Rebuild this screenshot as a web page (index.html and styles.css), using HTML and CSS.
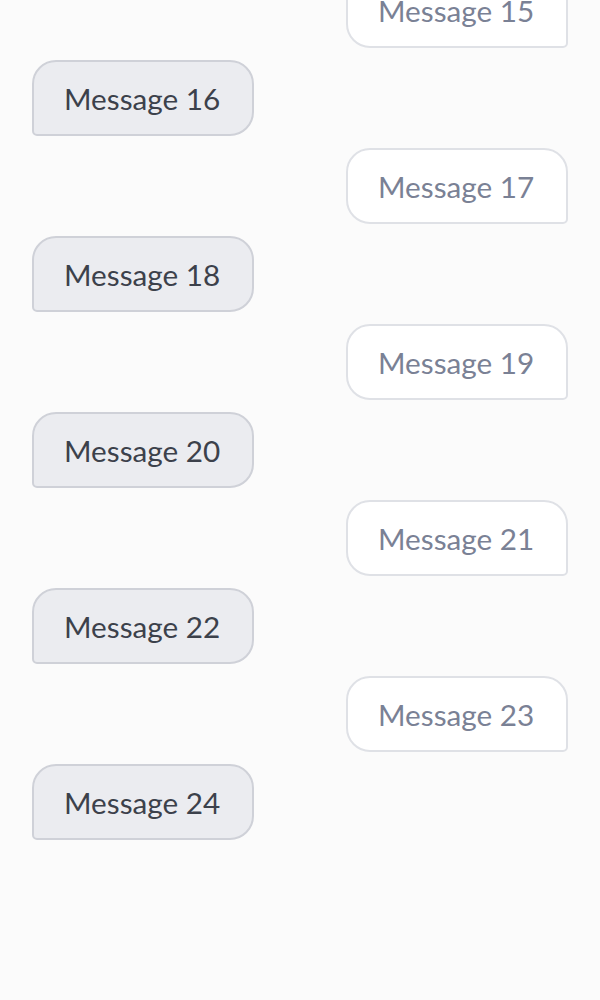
FILE: index.html
```html
<!DOCTYPE html>
<html lang="en">
<head>
<meta charset="utf-8">
<title>Messages</title>
<link rel="stylesheet" href="styles.css">
</head>
<body>
<main class="chat">
  <div class="msg msg-out">Message 1</div>
  <div class="msg msg-in">Message 2</div>
  <div class="msg msg-out">Message 3</div>
  <div class="msg msg-in">Message 4</div>
  <div class="msg msg-out">Message 5</div>
  <div class="msg msg-in">Message 6</div>
  <div class="msg msg-out">Message 7</div>
  <div class="msg msg-in">Message 8</div>
  <div class="msg msg-out">Message 9</div>
  <div class="msg msg-in">Message 10</div>
  <div class="msg msg-out">Message 11</div>
  <div class="msg msg-in">Message 12</div>
  <div class="msg msg-out">Message 13</div>
  <div class="msg msg-in">Message 14</div>
  <div class="msg msg-out">Message 15</div>
  <div class="msg msg-in">Message 16</div>
  <div class="msg msg-out">Message 17</div>
  <div class="msg msg-in">Message 18</div>
  <div class="msg msg-out">Message 19</div>
  <div class="msg msg-in">Message 20</div>
  <div class="msg msg-out">Message 21</div>
  <div class="msg msg-in">Message 22</div>
  <div class="msg msg-out">Message 23</div>
  <div class="msg msg-in">Message 24</div>
</main>
</body>
</html>
```
FILE: styles.css
```css
html, body {
  margin: 0;
  padding: 0;
  background: #fbfbfb;
}

.chat {
  box-sizing: border-box;
  height: 1000px;
  overflow: hidden;
  display: flex;
  flex-direction: column;
  justify-content: flex-end;
  gap: 12px;
  padding: 0 32px 160px 32px;
  font-family: Lato, "Open Sans", sans-serif;
}

.msg {
  flex: none;
  box-sizing: border-box;
  width: 222px;
  height: 76px;
  padding: 2px 30px 0;
  display: flex;
  align-items: center;
  font-size: 29.7px;
  line-height: 36px;
  border: 2px solid;
  border-radius: 24px;
  white-space: nowrap;
}

.msg-in {
  align-self: flex-start;
  background: #ebecf0;
  border-color: #cfd1d8;
  color: #3c414b;
  border-bottom-left-radius: 5px;
}

.msg-out {
  align-self: flex-end;
  background: #ffffff;
  border-color: #dfe1e6;
  color: #7a8195;
  border-bottom-right-radius: 5px;
}
```
